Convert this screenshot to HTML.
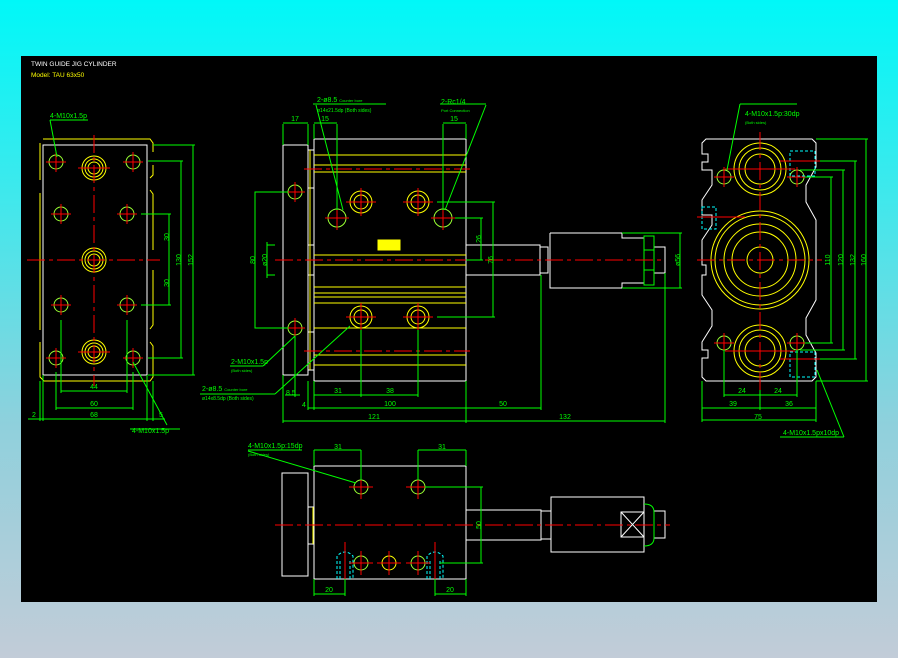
<!DOCTYPE html>
<html><head><meta charset="utf-8"><style>
html,body{margin:0;padding:0;width:898px;height:658px;overflow:hidden;background:linear-gradient(#00f8f8 0%,#40e8ec 30%,#90d0dc 65%,#c2ccd8 100%);}
svg{position:absolute;left:0;top:0}
text{font-family:"Liberation Sans",sans-serif;font-size:7px;fill:#00ff00}
</style></head><body>
<svg width="898" height="658" viewBox="0 0 898 658">
<rect x="21" y="56" width="856" height="546" fill="#000"/>
<text x="31" y="66" style="fill:#fff;font-size:6.5px">TWIN GUIDE JIG CYLINDER</text>
<text x="31" y="77" style="fill:#ff0;font-size:6.5px">Model: TAU 63x50</text>

<g fill="none" stroke-width="1">
<!-- LEFT VIEW -->
<path d="M43 139 H150 L153 143 V152 M153 165 V175 L150 178 M150 190 L153 194 V250 M153 270 V325 L150 329 M150 342 L153 346 V377 L150 381 H44 L40 377 V342 M40 330 V193 M40 180 V143 Z" stroke="#ff0"/>
<rect x="43" y="145" width="104" height="230" stroke="#fff"/>
<g stroke="#ff0">
<circle cx="94" cy="168" r="12"/><circle cx="94" cy="168" r="9"/><circle cx="94" cy="168" r="6"/>
<circle cx="94" cy="260" r="12"/><circle cx="94" cy="260" r="9"/><circle cx="94" cy="260" r="6"/>
<circle cx="94" cy="352" r="12"/><circle cx="94" cy="352" r="9"/><circle cx="94" cy="352" r="6"/>
</g>
<g stroke="#9f3">
<circle cx="56" cy="162" r="7"/><circle cx="133" cy="162" r="7"/>
<circle cx="61" cy="214" r="7"/><circle cx="127" cy="214" r="7"/>
<circle cx="61" cy="305" r="7"/><circle cx="127" cy="305" r="7"/>
<circle cx="56" cy="358" r="7"/><circle cx="133" cy="358" r="7"/>
</g>
<g stroke="#f00">
<path d="M27 260 H160 M94 135 V386" stroke-dasharray="18 4 4 4"/>
<path d="M46 162 H66 M56 152 V172 M123 162 H143 M133 152 V172 M51 214 H71 M61 204 V224 M117 214 H137 M127 204 V224 M51 305 H71 M61 295 V315 M117 305 H137 M127 295 V315 M46 358 H66 M56 348 V368 M123 358 H143 M133 348 V368 M78 168 H110 M78 352 H110"/>
</g>
<g stroke="#0f0">
<path d="M153 145 H195 M193 145 V375 M148 375 H195 M148 161 H183 M181 161 V358 M148 358 H183 M141 214 H171 M169 214 V305 M141 305 H171"/>
<path d="M61 320 V393 M127 320 V393 M61 391 H127 M56 372 V410 M133 372 V410 M56 408 H133 M43 375 V421 M147 375 V421 M28 419 H165 M40 381 V421 M153 381 V421"/>
<path d="M50 120 H88 M50 120 L57 157 M133 362 L167 425 M130 429 H180"/>
</g>
<text x="50" y="118">4-M10x1.5p</text>
<text x="190" y="263" transform="rotate(-90 190 260)" text-anchor="middle">152</text>
<text x="178" y="263" transform="rotate(-90 178 260)" text-anchor="middle">130</text>
<text x="166" y="240" transform="rotate(-90 166 237)" text-anchor="middle">30</text>
<text x="166" y="286" transform="rotate(-90 166 283)" text-anchor="middle">30</text>
<text x="94" y="389" text-anchor="middle">44</text>
<text x="94" y="406" text-anchor="middle">60</text>
<text x="94" y="417" text-anchor="middle">68</text>
<text x="32" y="417">2</text><text x="159" y="417">5</text>
<text x="132" y="433">4-M10x1.5p</text>

<!-- MIDDLE VIEW -->
<rect x="283" y="145" width="25" height="230" stroke="#fff"/>
<path d="M308 150 H314 V370 H308 M308 188 H314 M308 245 H314 M308 275 H314 M308 332 H314" stroke="#fff"/>
<path d="M310 150 V370" stroke="#ff0"/>
<rect x="314" y="139" width="152" height="242" stroke="#fff"/>
<path d="M314 155 H466 M314 165 H466 M314 172 H466 M314 255 H466 M314 265 H466 M314 287 H466 M314 293 H466 M314 297 H466 M314 303 H466 M314 328 H466 M314 355 H466 M314 365 H466" stroke="#ff0"/>
<rect x="378" y="240" width="22" height="10" stroke="#ff0" fill="#ff0"/>
<path d="M466 245 H540 V275 H466 M540 247 H548 V273 H540 M550 233 H622 V238 H644 M550 233 V288 H622 V283 H644 M654 247 H665 V273 H654" stroke="#fff"/>
<path d="M644 236 H654 V285 H644 Z M644 250 H654 M644 270 H654" stroke="#0f0"/>
<g stroke="#ff0">
<circle cx="361" cy="202" r="11"/><circle cx="361" cy="202" r="7"/>
<circle cx="418" cy="202" r="11"/><circle cx="418" cy="202" r="7"/>
<circle cx="361" cy="317" r="11"/><circle cx="361" cy="317" r="7"/>
<circle cx="418" cy="317" r="11"/><circle cx="418" cy="317" r="7"/>
</g>
<g stroke="#9f3"><circle cx="337" cy="218" r="9"/><circle cx="443" cy="218" r="9"/><circle cx="295" cy="192" r="7"/><circle cx="295" cy="328" r="7"/></g>
<g stroke="#f00">
<path d="M275 260 H665 M304 169 H470 M304 351 H470" stroke-dasharray="18 4 4 4"/>
<path d="M346 202 H376 M361 188 V216 M403 202 H433 M418 188 V216 M346 317 H376 M361 303 V331 M403 317 H433 M418 303 V331 M325 218 H349 M337 206 V230 M431 218 H455 M443 206 V230 M285 192 H305 M295 182 V202 M285 328 H305 M295 318 V338"/>
</g>
<g stroke="#0f0">
<path d="M283 124 V145 M308 124 V145 M283 123 H308 M314 124 V139 M337 124 V210 M314 123 H337 M443 124 V210 M466 124 V139 M443 123 H466"/>
<path d="M437 202 H495 M493 202 V317 M437 317 H495 M455 218 H483 M481 218 V260 M466 260 H483"/>
<path d="M622 233 H682 M680 233 V288 M622 288 H682"/>
<path d="M288 192 H255 V328 H288 M275 245 H267 V275 H275 M267 242 V278"/>
<path d="M283 375 V423 M295 336 V397 M285 395 H300 M314 381 V410 M361 330 V397 M418 330 V397 M314 395 H418 M308 381 V410 M308 408 H541 M466 381 V423 M541 275 V410 M283 421 H665 M665 273 V423"/>
<path d="M316 105 L343 210 M313 104 H386 M486 105 L445 210 M440 104 H486 M350 326 L275 394 M200 394 H275 M295 336 L263 366 M230 366 H263"/>
</g>
<text x="317" y="102">2-ø8.5 <tspan style="font-size:4px">Counter bore</tspan></text>
<text x="317" y="112" style="font-size:5px">ø14x21.5dp (Both sides)</text>
<text x="441" y="104">2-Rc1/4</text>
<text x="441" y="112" style="font-size:4px">Port Connection</text>
<text x="295" y="121" text-anchor="middle">17</text>
<text x="325" y="121" text-anchor="middle">15</text>
<text x="454" y="121" text-anchor="middle">15</text>
<text x="490" y="263" transform="rotate(-90 490 260)" text-anchor="middle">76</text>
<text x="478" y="242" transform="rotate(-90 478 239)" text-anchor="middle">26</text>
<text x="677" y="263" transform="rotate(-90 677 260)" text-anchor="middle">ø56</text>
<text x="252" y="263" transform="rotate(-90 252 260)" text-anchor="middle">80</text>
<text x="264" y="263" transform="rotate(-90 264 260)" text-anchor="middle">ø20</text>
<text x="286" y="395">8.5</text>
<text x="338" y="393" text-anchor="middle">31</text>
<text x="390" y="393" text-anchor="middle">38</text>
<text x="302" y="407">4</text>
<text x="390" y="406" text-anchor="middle">100</text>
<text x="503" y="406" text-anchor="middle">50</text>
<text x="374" y="419" text-anchor="middle">121</text>
<text x="565" y="419" text-anchor="middle">132</text>
<text x="231" y="364">2-M10x1.5p</text>
<text x="231" y="372" style="font-size:4px">(Both sides)</text>
<text x="202" y="391">2-ø8.5 <tspan style="font-size:4px">Counter bore</tspan></text>
<text x="202" y="400" style="font-size:5px">ø14x8.5dp (Both sides)</text>

<!-- RIGHT VIEW -->
<path d="M706 139 H812 L816 143 V167 L806 185 V202 L816 220 V300 L806 318 V335 L816 353 V377 L812 381 H706 L702 377 V358 H708 V350 H702 V342 L712 326 V310 L702 295 V275 H706 V265 H702 V240 L712 225 V215 H702 V200 L712 185 V170 H702 V162 H708 V154 H702 V143 Z" stroke="#fff"/>
<g stroke="#ff0">
<circle cx="760" cy="169" r="26"/><circle cx="760" cy="169" r="21"/><circle cx="760" cy="169" r="15"/>
<circle cx="760" cy="351" r="26"/><circle cx="760" cy="351" r="21"/><circle cx="760" cy="351" r="15"/>
<circle cx="760" cy="260" r="49"/><circle cx="760" cy="260" r="45"/><circle cx="760" cy="260" r="36"/><circle cx="760" cy="260" r="28"/><circle cx="760" cy="260" r="13"/>
</g>
<g stroke="#9f3"><circle cx="724" cy="177" r="7"/><circle cx="797" cy="177" r="7"/><circle cx="724" cy="343" r="7"/><circle cx="797" cy="343" r="7"/></g>
<g stroke="#0ff" stroke-dasharray="3 2"><rect x="790" y="151" width="25" height="25"/><rect x="790" y="352" width="25" height="25"/><rect x="702" y="207" width="14" height="22"/></g>
<g stroke="#f00">
<path d="M760 132 V390 M697 260 H822" stroke-dasharray="18 4 4 4"/>
<path d="M725 169 H795 M725 351 H795 M714 177 H734 M724 167 V187 M787 177 H807 M797 167 V187 M714 343 H734 M724 333 V353 M787 343 H807 M797 333 V353 M780 161 H822 M780 359 H822 M697 217 H745"/>
</g>
<g stroke="#0f0">
<path d="M816 139 H868 M866 139 V381 M816 381 H868 M820 161 H857 M855 161 V359 M820 359 H857 M800 170 H845 M843 170 V350 M800 350 H845 M805 177 H833 M831 177 V343 M805 343 H833"/>
<path d="M724 350 V397 M797 350 V397 M724 395 H797 M702 381 V422 M816 381 V422 M702 408 H816 M702 420 H816 M760 390 V410"/>
<path d="M740 104 H797 M740 104 L727 170 M817 370 L844 437 M780 437 H844"/>
</g>
<text x="745" y="116">4-M10x1.5p:30dp</text>
<text x="745" y="124" style="font-size:4px">(Both sides)</text>
<text x="827" y="263" transform="rotate(-90 827 260)" text-anchor="middle">110</text>
<text x="840" y="263" transform="rotate(-90 840 260)" text-anchor="middle">120</text>
<text x="852" y="263" transform="rotate(-90 852 260)" text-anchor="middle">132</text>
<text x="863" y="263" transform="rotate(-90 863 260)" text-anchor="middle">160</text>
<text x="742" y="393" text-anchor="middle">24</text><text x="778" y="393" text-anchor="middle">24</text>
<text x="733" y="406" text-anchor="middle">39</text><text x="789" y="406" text-anchor="middle">36</text>
<text x="758" y="419" text-anchor="middle">75</text>
<text x="783" y="435">4-M10x1.5px10dp</text>

<!-- BOTTOM VIEW -->
<rect x="282" y="473" width="26" height="103" stroke="#fff"/>
<path d="M308 507 H314 M308 544 H314" stroke="#fff"/><path d="M313 507 V544" stroke="#ff0"/>
<rect x="314" y="466" width="152" height="113" stroke="#fff"/>
<path d="M466 510 H541 V540 H466 M541 511 H551 V539 H541 M551 497 H644 V552 H551 Z M621 512 H644 V537 H621 Z M621 512 L644 537 M644 512 L621 537 M654 511 H665 V538 H654" stroke="#fff"/>
<path d="M644 504 Q654 504 654 512 V538 Q654 546 644 546" stroke="#0f0"/>
<g stroke="#9f3"><circle cx="361" cy="487" r="7"/><circle cx="418" cy="487" r="7"/><circle cx="361" cy="563" r="7"/><circle cx="418" cy="563" r="7"/></g>
<circle cx="389" cy="563" r="7" stroke="#ff0"/>
<g stroke="#0ff" stroke-dasharray="3 2"><path d="M337 579 V556 Q345 548 353 556 V579 M340 579 V560 M350 579 V560 M427 579 V556 Q435 548 443 556 V579 M430 579 V560 M440 579 V560"/></g>
<g stroke="#f00">
<path d="M275 525 H670" stroke-dasharray="18 4 4 4"/>
<path d="M349 487 H373 M361 475 V499 M406 487 H430 M418 475 V499 M349 563 H373 M361 551 V575 M377 563 H401 M389 551 V575 M406 563 H430 M418 551 V575 M345 542 V580 M435 542 V580"/>
</g>
<g stroke="#0f0">
<path d="M314 450 V466 M361 450 V480 M314 450 H361 M418 450 V480 M466 450 V466 M418 450 H466 M425 487 H483 M481 487 V563 M440 563 H483"/>
<path d="M314 579 V596 M345 579 V596 M314 594 H345 M435 579 V596 M466 579 V596 M435 594 H466"/>
<path d="M248 451 L356 483 M248 450 H302"/>
</g>
<text x="248" y="448">4-M10x1.5p:15dp</text>
<text x="248" y="456" style="font-size:4px">(Both sides)</text>
<text x="338" y="449" text-anchor="middle">31</text>
<text x="442" y="449" text-anchor="middle">31</text>
<text x="478" y="528" transform="rotate(-90 478 525)" text-anchor="middle">50</text>
<text x="329" y="592" text-anchor="middle">20</text>
<text x="450" y="592" text-anchor="middle">20</text>
</g>
</svg>
</body></html>
